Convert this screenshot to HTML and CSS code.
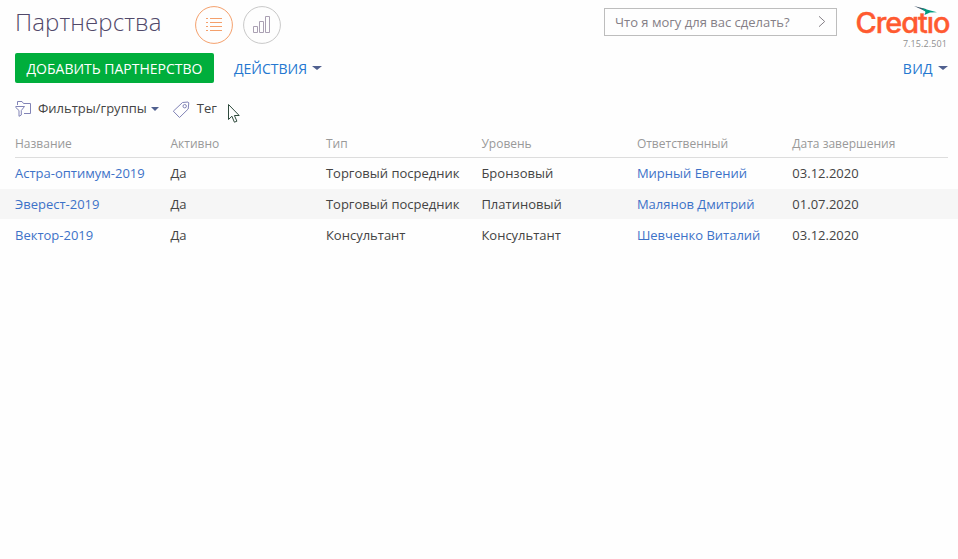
FILE: index.html
```html
<!DOCTYPE html>
<html lang="ru">
<head>
<meta charset="utf-8">
<title>Партнерства</title>
<link rel="stylesheet" href="styles.css">
</head>
<body>
<header class="header">
  <h1 class="title">Партнерства</h1>
  <nav class="views">
    <button class="view view-active" aria-label="Список">
      <svg width="38" height="38" viewBox="0 0 38 38"><circle cx="19" cy="19" r="18.4"/><path d="M11 12.5h2M15 12.5h12M11 16.5h2M15 16.5h12M11 20.5h2M15 20.5h12M11 24.5h2M15 24.5h12"/></svg>
    </button>
    <button class="view" aria-label="Аналитика">
      <svg width="38" height="38" viewBox="0 0 38 38"><circle cx="19" cy="19" r="18.4"/><path class="bars" d="M10.5 20.5h4v6h-4zM16.500 15.500h4v11h-4zM22.500 10.500h4v16h-4z"/></svg>
    </button>
  </nav>
  <div class="command">
    <span class="command-text">Что я могу для вас сделать?</span>
    <svg width="10" height="12" viewBox="0 0 10 12"><path d="M2 .3 7.700 5.500 2 10.700"/></svg>
  </div>
  <div class="brand">
    <svg class="logo" width="96" height="32" viewBox="0 0 96 32">
      <text x="1.500" y="26.500" textLength="94" lengthAdjust="spacingAndGlyphs">Creatio</text>
      <path class="logo-gap" d="M71 0h10v10.500H71z"/>
      <path class="wing-dark" d="m60 0 12 3 1 3z"/>
      <path class="wing" d="m67 2 16 4.200-7 .4-5.500 2.400 1-3.200z"/>
    </svg>
    <span class="version">7.15.2.501</span>
  </div>
</header>
<div class="toolbar">
  <button class="add">ДОБАВИТЬ ПАРТНЕРСТВО</button>
  <button class="menu"><span class="menu-actions">ДЕЙСТВИЯ</span><i class="caret"></i></button>
  <button class="menu menu-view"><span>ВИД</span><i class="caret"></i></button>
</div>
<div class="filters">
  <svg class="filter-icon" width="18" height="17" viewBox="0 0 18 17"><path d="M2.500 5V1.500h4.500L8.500 3.500h7v10H9"/><path d="M.8 6.500h8.700l-3.200 4v4.500L4 16.300v-5.800L.8 7.500z"/></svg>
  <span class="filter-label">Фильтры/группы</span><i class="caret"></i>
  <svg class="tag-icon" width="18" height="18" viewBox="0 0 18 18"><path d="m10.500 1.500 5.500-.5.800.8-.6 6.200-8.700 8.500-6.200-6.300z"/><circle cx="12.700" cy="5.200" r="1.700"/></svg>
  <span class="tag-label">Тег</span>
  <svg class="cursor" width="14" height="21" viewBox="0 0 14 21"><path d="M1.500 1.500v15l3.400-3.300 2.500 6 2.500-1-2.500-5.700h4.800z"/></svg>
</div>
<main class="grid">
  <div class="row head"><span>Название</span><span>Активно</span><span>Тип</span><span>Уровень</span><span>Ответственный</span><span>Дата завершения</span></div>
  <div class="row"><a>Астра-оптимум-2019</a><span>Да</span><span>Торговый посредник</span><span>Бронзовый</span><a>Мирный Евгений</a><span>03.12.2020</span></div>
  <div class="row striped"><a>Эверест-2019</a><span>Да</span><span>Торговый посредник</span><span>Платиновый</span><a>Малянов Дмитрий</a><span>01.07.2020</span></div>
  <div class="row"><a>Вектор-2019</a><span>Да</span><span>Консультант</span><span>Консультант</span><a>Шевченко Виталий</a><span>03.12.2020</span></div>
</main>
</body>
</html>
```
FILE: styles.css
```css
* { box-sizing: border-box; }
body {
  margin: 0;
  min-height: 559px;
  background: #fefefe;
  color: #444;
  font: 13px/20px "Open Sans", sans-serif;
}
button { margin: 0; padding: 0; border: 0; background: none; font: inherit; }
svg { display: block; flex: none; fill: none; }
.header { display: flex; height: 53px; padding: 6px 9px 0 15px; }
.title {
  width: 180px;
  margin: 0;
  color: #51496a;
  font-size: 24px;
  font-weight: 300;
  letter-spacing: .1px;
  line-height: 32px;
  white-space: nowrap;
}
.views { display: flex; gap: 10px; }
.view { width: 38px; height: 38px; stroke: #c8c8c8; }
.view-active { stroke: #f4a06c; }
.bars { stroke: #aaa0b3; }
.command {
  display: flex;
  align-items: center;
  justify-content: space-between;
  width: 233px;
  height: 28px;
  margin: 2px 18px 0 auto;
  padding: 0 9px 0 10px;
  border: 1px solid #bdbdbd;
  color: #858087;
  stroke: #858087;
}
.command-text { stroke: none; white-space: nowrap; }
.brand { display: flex; flex-direction: column; align-items: flex-end; width: 94px; }
.logo { margin-right: -1px; overflow: visible; }
.logo text {
  fill: #ff5a30;
  stroke: #ff5a30;
  stroke-width: .4px;
  font: 500 28px Inter, sans-serif;
  font-feature-settings: "cv11";
  letter-spacing: -1px;
}
.logo-gap { fill: #fefefe; }
.wing-dark { fill: #3e5366; }
.wing { fill: #009d80; }
.version { margin-right: 2px; color: #8e8e8e; font-size: 9px; letter-spacing: .1px; line-height: 12px; }
.toolbar { display: flex; align-items: center; height: 30px; padding: 0 10px 0 15px; font-size: 14px; }
.add {
  width: 199px;
  height: 30px;
  margin-right: 20px;
  padding-top: 1px;
  border-radius: 2px;
  background: #00ae3c;
  color: #fff;
  white-space: nowrap;
}
.menu { display: flex; align-items: center; gap: 5px; color: #2477d0; line-height: 30px; }
.menu span { padding-top: 2px; line-height: 28px; }
.menu-view { margin-left: auto; letter-spacing: .3px; }
.caret { border: solid transparent; border-width: 4px 4.500px 0; border-top-color: #50608f; }
.menu .caret { border-width: 4px 5px 0; }
.filters { display: flex; align-items: center; height: 29px; margin-top: 11px; padding-left: 15px; }
.filter-label { margin: -2px 4px 0 5px; }
.tag-icon { margin: 2px 7px 0 13px; }
.tag-label { margin-top: -2px; }
.filter-icon, .tag-icon { stroke: #8183b6; }
.cursor { margin: 10px 0 0 10px; fill: #fff; stroke: #2f4a3d; }
.grid { margin-top: 7px; }
.row {
  display: grid;
  grid-template-columns: repeat(6, 155.480px);
  align-items: center;
  height: 31px;
  padding: 0 0 2px 15px;
  white-space: nowrap;
}
.row a { color: #3d72c8; }
.head {
  height: 28px;
  margin: 0 10px 0 15px;
  padding: 0;
  border-bottom: 1px solid #ddd;
  color: #999;
  font-size: 12px;
}
.striped { background: linear-gradient(#f6f6f6, #f6f6f6) 0 0 / 100% 30px no-repeat; }
```
